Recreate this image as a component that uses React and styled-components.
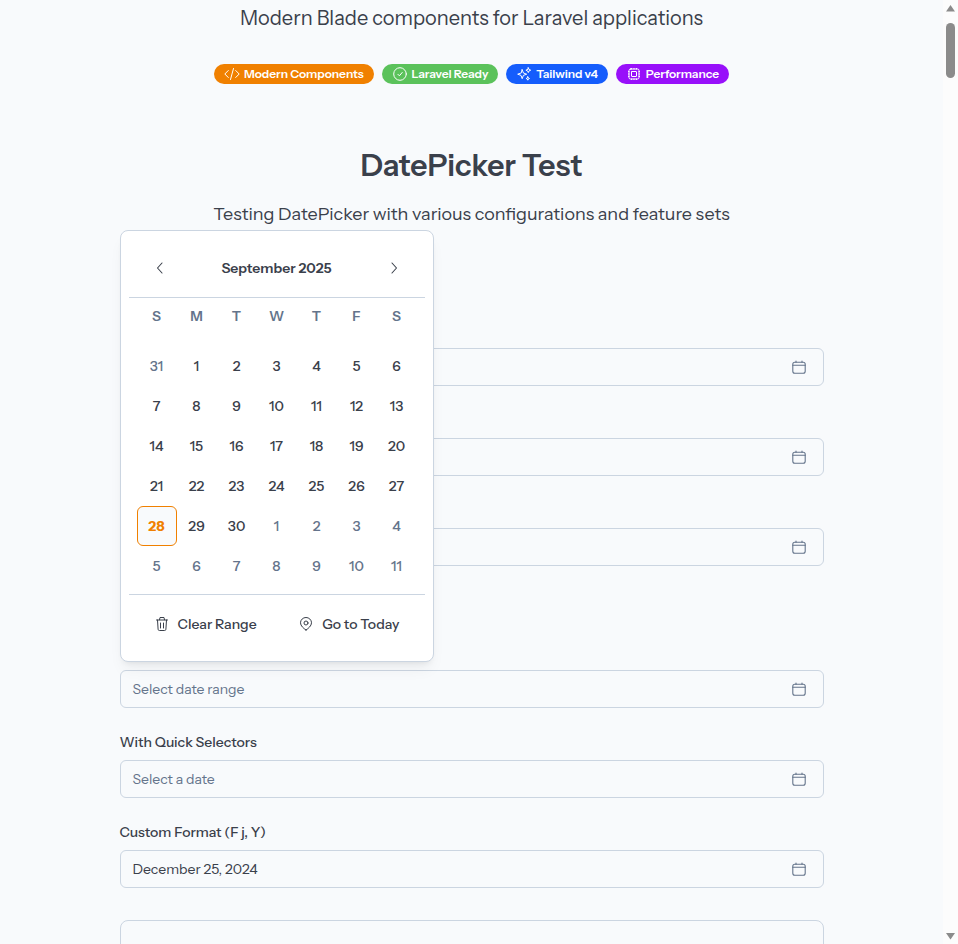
import React from "react";
import styled, { createGlobalStyle, css } from "styled-components";

const Global = createGlobalStyle`
  * { box-sizing: border-box; }
  body { margin: 0; background: #f8fafc; overflow: hidden; }
`;

const Screen = styled.div`
  display: flex;
  height: 944px;
  overflow: hidden;
  background: #f8fafc;
  color: #3a404b;
  font-family: "Instrument Sans", Inter, "Liberation Sans", sans-serif;
  font-size: 14px;
`;
const Page = styled.main`
  flex: 1;
  display: flex;
  flex-direction: column;
  align-items: center;
`;
const Tagline = styled.p`
  margin: 4px 0 0;
  font-size: 20px;
  line-height: 28px;
  white-space: nowrap;
`;
const Badges = styled.div`
  display: flex;
  gap: 8px;
  margin-top: 32px;
`;
const Badge = styled.span`
  display: flex;
  align-items: center;
  gap: 4px;
  height: 20px;
  padding: 0 10px;
  border-radius: 10px;
  background: ${(p) => p.$color};
  color: #fff;
  font-size: 12px;
  line-height: 20px;
  font-weight: 600;
  letter-spacing: -0.075px;
  white-space: nowrap;
`;
const BadgeText = styled.span`
  height: 20px;
  line-height: 19px;
`;
const Title = styled.h1`
  margin: 62px 0 0;
  font-size: 30px;
  line-height: 40px;
  font-weight: 600;
`;
const Subtitle = styled.p`
  margin: 14px 0 0;
  font-size: 18px;
  line-height: 28px;
  white-space: nowrap;
`;
const Content = styled.div`
  width: 704px;
  padding-top: 120px;
`;
const FieldGroup = styled.section`
  display: flex;
  flex-direction: column;
  gap: ${(p) => (p.$labelled ? 24 : 52)}px;
  margin-bottom: ${(p) => p.$after}px;
`;
const Field = styled.div`
  position: relative;
`;
const Label = styled.label`
  display: block;
  height: 20px;
  margin-bottom: 8px;
  line-height: 20px;
  font-weight: 500;
`;
const Input = styled.div`
  display: flex;
  align-items: center;
  justify-content: space-between;
  height: 38px;
  padding: 0 17px 0 12px;
  border: 1px solid #cbd5e1;
  border-radius: 6px;
  color: ${(p) => (p.$placeholder ? "#64748b" : "#3a404b")};
`;
const Popup = styled.div`
  position: absolute;
  left: 0;
  bottom: 46px;
  z-index: 2;
  display: flex;
  flex-direction: column;
  width: 314px;
  height: 432px;
  padding: 0 8px;
  border: 1px solid #cbd5e1;
  border-radius: 8px;
  background: #fff;
  box-shadow: 0 10px 15px -3px rgba(0, 0, 0, 0.05), 0 4px 6px -4px rgba(0, 0, 0, 0.1);
`;
const MonthBar = styled.header`
  display: flex;
  align-items: center;
  justify-content: space-between;
  height: 67px;
  padding: 8px 23px 0;
  border-bottom: 1px solid #cbd5e1;
  font-weight: 600;
`;
const Grid = styled.div`
  display: grid;
  grid-template-columns: repeat(7, 40px);
  justify-content: center;
`;
const Weekday = styled.span`
  height: 48px;
  line-height: 37px;
  text-align: center;
  font-weight: 600;
  color: #64748b;
`;
const Day = styled.span`
  height: 40px;
  line-height: 40px;
  text-align: center;
  font-weight: 500;
  color: ${(p) => (p.$outside ? "#64748b" : "#3a404b")};
  ${(p) =>
    p.$today &&
    css`
      border: 1px solid #f08000;
      border-radius: 6px;
      background: #f8fafc;
      color: #f08000;
      font-weight: 700;
      line-height: 38px;
    `}
`;
const Actions = styled.footer`
  display: flex;
  gap: 41.5px;
  margin-top: 8px;
  padding: 19px 0 0 25px;
  border-top: 1px solid #cbd5e1;
`;
const Action = styled.span`
  display: flex;
  align-items: center;
  gap: 8px;
  height: 20px;
  font-weight: 500;
  white-space: nowrap;
`;
const Card = styled.section`
  height: 60px;
  border: 1px solid #cbd5e1;
  border-radius: 8px;
`;
const ScrollTrack = styled.aside`
  display: flex;
  flex-direction: column;
  align-items: center;
  width: 15px;
  padding: 5px 0 4px;
  background: #fcfcfc;
`;
const ScrollThumb = styled.div`
  width: 9px;
  height: 55px;
  margin: 11px 0 auto;
  border-radius: 5px;
  background: #8b8b8b;
`;
const Glyph = styled.svg`
  flex: none;
  display: block;
  fill: none;
  stroke: currentColor;
  stroke-width: ${(p) => p.$stroke || 1};
  stroke-linecap: round;
  stroke-linejoin: round;
`;

const CalendarIcon = () => (
  <Glyph width="14" height="14" viewBox="0 0 14 14" color="#64748b" $stroke={1.1}>
    <rect x="0.8" y="2.3" width="12.4" height="10.9" rx="2" />
    <path d="M.8 5.3h12.4M4 2.3V1.1M10 2.3V1.1" />
  </Glyph>
);
const CodeIcon = () => (
  <Glyph width="16" height="14" viewBox="0 0 16 14">
    <path d="M4.3 3.5.8 7l3.5 3.5M11.7 3.5 15.2 7l-3.5 3.5M9.5 1.5l-3 11" />
  </Glyph>
);
const CheckIcon = () => (
  <Glyph width="16" height="14" viewBox="0 0 16 14">
    <circle cx="8" cy="7" r="6.3" />
    <path d="m5.9 7.3 1.5 1.5 2.8-3.3" />
  </Glyph>
);
const SparklesIcon = () => (
  <Glyph width="16" height="14" viewBox="0 0 16 14">
    <path d="M6.2 2.7 7.4 6l3.3 1.2-3.3 1.2-1.2 3.3L5 8.4 1.7 7.2 5 6zM12.3.8l.7 1.7 1.7.7-1.7.7-.7 1.7-.7-1.7-1.7-.7 1.7-.7zM11.8 9.8l.5 1.2 1.2.5-1.2.5-.5 1.2-.5-1.2-1.2-.5 1.2-.5z" />
  </Glyph>
);
const ChipIcon = () => (
  <Glyph width="16" height="14" viewBox="0 0 16 14">
    <rect x="3" y="2" width="10" height="10" rx="1.5" />
    <rect x="5.5" y="4.5" width="5" height="5" rx="0.5" />
    <path d="M5.5 1.5v.5M8 1.5v.5M10.5 1.5v.5M5.5 12v.5M8 12v.5M10.5 12v.5M2.5 4.5H3M2.5 7H3M2.5 9.5H3M13 4.5h.5M13 7h.5M13 9.5h.5" />
  </Glyph>
);
const Chevron = ({ d }) => (
  <Glyph width="16" height="16" viewBox="0 0 16 16" $stroke={1.1}>
    <path d={d} />
  </Glyph>
);
const TrashIcon = () => (
  <Glyph width="16" height="16" viewBox="0 0 16 16">
    <path d="M2.5 4h11M5.5 3.8 6 1.5h4l.5 2.3M3.5 4l.6 9.3q.1 1.2 1.3 1.2h5.2q1.2 0 1.3-1.2L12.5 4M6.5 7v5M9.5 7v5" />
  </Glyph>
);
const PinIcon = () => (
  <Glyph width="16" height="16" viewBox="0 0 16 16">
    <path d="M8 14C5.6 12.500 2.5 9.8 2.5 6.8a5.5 5.3 0 0 1 11 0c0 3-3.100 5.700-5.500 7.200z" />
    <circle cx="8" cy="7" r="2" />
  </Glyph>
);
const Arrow = ({ d }) => (
  <svg width="9" height="7" viewBox="0 0 9 7" fill="#8b8b8b">
    <path d={d} />
  </svg>
);

const days = [31, ...Array.from({ length: 30 }, (_, i) => i + 1), ...Array.from({ length: 11 }, (_, i) => i + 1)];

const Calendar = () => (
  <Popup>
    <MonthBar>
      <Chevron d="M10 3 5.5 8l4.5 5" />
      September 2025
      <Chevron d="M6 3 10.5 8 6 13" />
    </MonthBar>
    <Grid>
      {["S", "M", "T", "W", "T", "F", "S"].map((d, i) => (
        <Weekday key={i}>{d}</Weekday>
      ))}
      {days.map((d, i) => (
        <Day key={i} $outside={i === 0 || i > 30} $today={i === 28}>
          {d}
        </Day>
      ))}
    </Grid>
    <Actions>
      <Action><TrashIcon />Clear Range</Action>
      <Action><PinIcon />Go to Today</Action>
    </Actions>
  </Popup>
);

export default function App() {
  return (
    <Screen>
      <Global />
      <Page>
        <Tagline>Modern Blade components for Laravel applications</Tagline>
        <Badges>
          <Badge $color="#f08000"><CodeIcon /><BadgeText>Modern Components</BadgeText></Badge>
          <Badge $color="#5bc25b"><CheckIcon /><BadgeText>Laravel Ready</BadgeText></Badge>
          <Badge $color="#155dfc"><SparklesIcon /><BadgeText>Tailwind v4</BadgeText></Badge>
          <Badge $color="#9810fa"><ChipIcon /><BadgeText>Performance</BadgeText></Badge>
        </Badges>
        <Title>DatePicker Test</Title>
        <Subtitle>Testing DatePicker with various configurations and feature sets</Subtitle>
        <Content>
          <FieldGroup $after={104}>
            <Input><span /><CalendarIcon /></Input>
            <Input><span /><CalendarIcon /></Input>
            <Input><span /><CalendarIcon /></Input>
          </FieldGroup>
          <FieldGroup $labelled $after={32}>
            <Field>
              <Calendar />
              <Input $placeholder>Select date range<CalendarIcon /></Input>
            </Field>
            <Field>
              <Label>With Quick Selectors</Label>
              <Input $placeholder>Select a date<CalendarIcon /></Input>
            </Field>
            <Field>
              <Label>Custom Format (F j, Y)</Label>
              <Input>December 25, 2024<CalendarIcon /></Input>
            </Field>
          </FieldGroup>
          <Card />
        </Content>
      </Page>
      <ScrollTrack>
        <Arrow d="M4.5 0 9 6.5H0z" />
        <ScrollThumb />
        <Arrow d="M0 0h9L4.5 6.5z" />
      </ScrollTrack>
    </Screen>
  );
}
